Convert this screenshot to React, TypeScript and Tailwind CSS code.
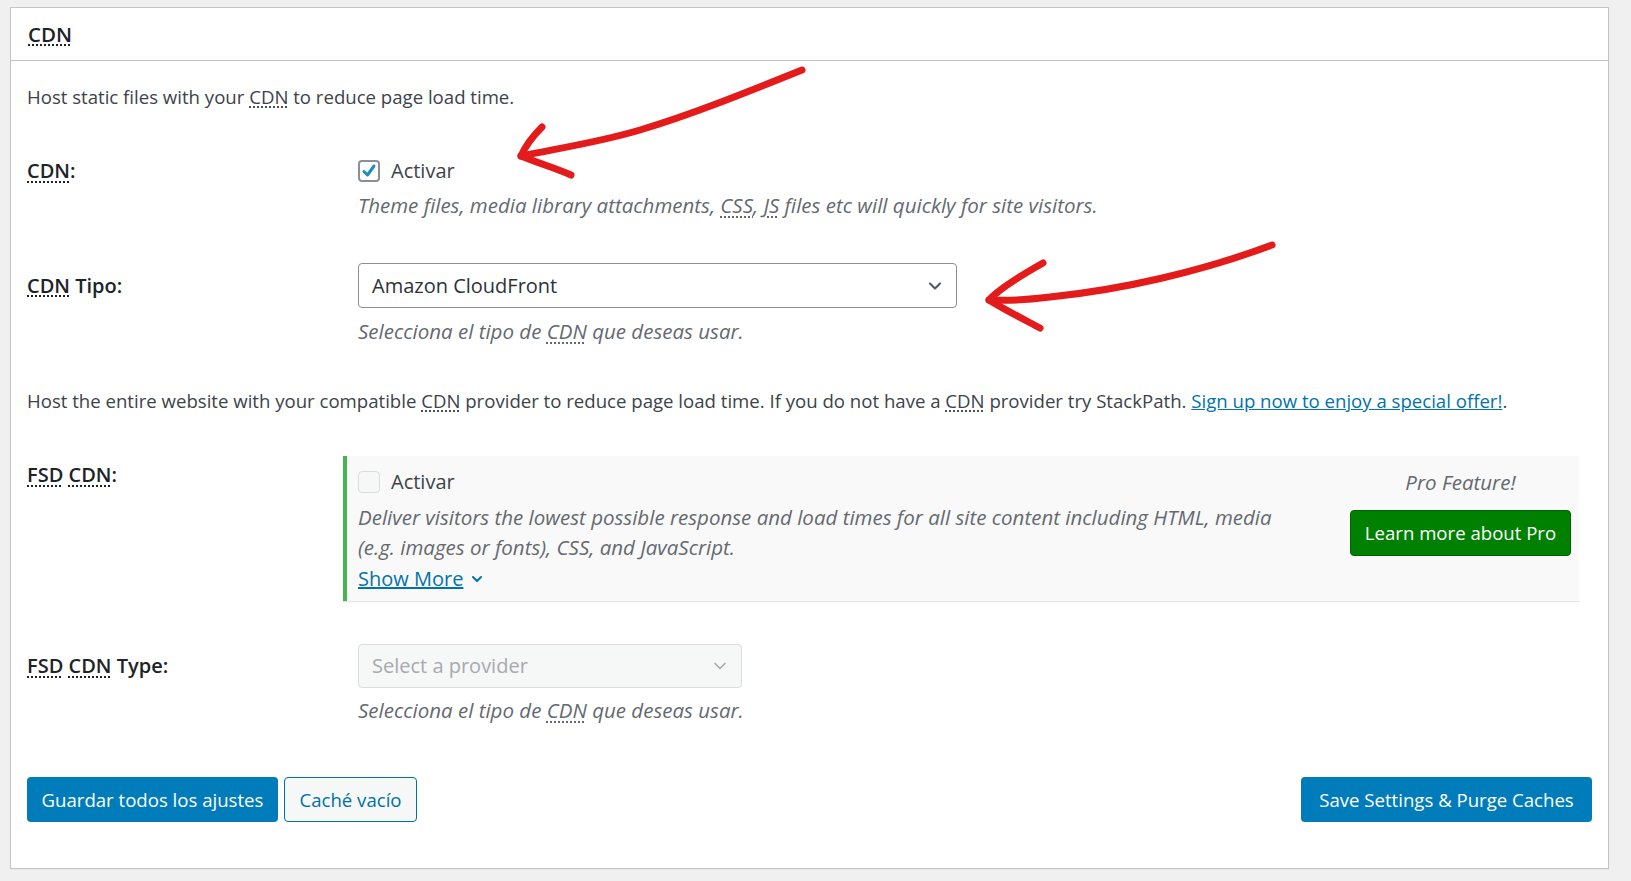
import { ChevronDown } from 'lucide-react'

const font = { fontFamily: '"Open Sans", "Noto Sans", Arial, sans-serif' }

function Abbr({ children }: { children: string }) {
  return (
    <abbr title={children} className="underline decoration-dotted underline-offset-[3px]">
      {children}
    </abbr>
  )
}

function Check({ checked, disabled }: { checked?: boolean; disabled?: boolean }) {
  return (
    <span
      className={
        disabled
          ? 'flex h-[22px] w-[22px] shrink-0 items-center justify-center rounded-[4px] border border-[#dcdcde] bg-[#f6f7f7]'
          : 'flex h-[22px] w-[22px] shrink-0 items-center justify-center rounded-[4px] border-2 border-[#8c8f94] bg-white'
      }
    >
      {checked && (
        <svg width="16" height="16" viewBox="0 0 16 16">
          <path d="M3 8.5 L6.5 12 L13 3" fill="none" stroke="#1e8cbe" strokeWidth="3" strokeLinecap="round" strokeLinejoin="round" />
        </svg>
      )}
    </span>
  )
}

function Arrows() {
  return (
    <svg className="pointer-events-none absolute left-0 top-0" width="1631" height="881">
      <g fill="none" stroke="#e31b1b" strokeWidth="7" strokeLinecap="round" strokeLinejoin="round">
        <path d="M802 70 C 740 95, 690 115, 640 130 C 600 142, 560 148, 521 156" />
        <path d="M542 127 C 532 137, 525 147, 521 156 C 535 162, 555 168, 571 175" />
        <path d="M1272 245 C 1200 272, 1120 290, 1050 297 C 1025 300, 1005 301, 989 300" />
        <path d="M1043 263 C 1020 276, 1000 288, 989 300 C 1005 310, 1025 320, 1040 328" />
      </g>
    </svg>
  )
}

export default function App() {
  return (
    <div className="relative min-h-screen bg-[#f0f0f1] pl-[10px] pr-[22px] pt-[7px] text-[18.6px] text-[#3c434a]" style={font}>
      <div className="border border-[#c3c4c7] bg-white shadow-[0_1px_1px_rgba(0,0,0,0.04)]">
        <div className="flex h-[53px] items-center border-b border-[#c3c4c7] px-[17px] text-[20.5px] font-semibold text-[#1d2327]">
          <Abbr>CDN</Abbr>
        </div>

        <div className="px-4 pb-[46px] pt-[21px] leading-[30px]">
          <p>
            Host static files with your <Abbr>CDN</Abbr> to reduce page load time.
          </p>

          <div className="mt-[44px] flex">
            <div className="w-[331px] shrink-0 text-[20px] font-semibold text-[#1d2327]">
              <Abbr>CDN</Abbr>:
            </div>
            <div>
              <label className="flex items-center gap-[11px] text-[20px]">
                <Check checked />
                <span>Activar</span>
              </label>
              <p className="mt-1 text-[20.5px] italic text-[#646970]">
                Theme files, media library attachments, <Abbr>CSS</Abbr>, <Abbr>JS</Abbr> files etc will quickly for site visitors.
              </p>
            </div>
          </div>

          <div className="mt-[43px] flex">
            <div className="flex h-[45px] w-[331px] shrink-0 items-center text-[20px] font-semibold text-[#1d2327]">
              <span>
                <Abbr>CDN</Abbr> Tipo:
              </span>
            </div>
            <div>
              <div className="flex h-[45px] w-[599px] items-center justify-between rounded-[4px] border border-[#8c8f94] bg-white pl-[13px] pr-[11px] text-[20px] text-[#2c3338]">
                <span>Amazon CloudFront</span>
                <ChevronDown size={20} strokeWidth={2.5} className="text-[#50575e]" />
              </div>
              <p className="mt-2 text-[20.5px] italic text-[#646970]">
                Selecciona el tipo de <Abbr>CDN</Abbr> que deseas usar.
              </p>
            </div>
          </div>

          <p className="mt-[40px]">
            Host the entire website with your compatible <Abbr>CDN</Abbr> provider to reduce page load time. If you do not have a <Abbr>CDN</Abbr> provider try StackPath.{' '}
            <a href="#" className="text-[#0073aa] underline">
              Sign up now to enjoy a special offer!
            </a>
            .
          </p>

          <div className="mt-[40px] flex">
            <div className="w-[316px] shrink-0 pt-[4px] text-[20px] font-semibold text-[#1d2327]">
              <Abbr>FSD</Abbr> <Abbr>CDN</Abbr>:
            </div>
            <div className="flex w-[1236px] border-l-4 border-[#46b450] bg-[#f9f9f9] pb-[7px] pl-[11px] pr-[8px] pt-[11px] shadow-[0_1px_1px_rgba(0,0,0,0.1)]">
              <div className="flex-1">
                <label className="flex items-center gap-[11px] text-[20px]">
                  <Check disabled />
                  <span>Activar</span>
                </label>
                <p className="mt-[5px] text-[20.5px] italic text-[#646970]">
                  Deliver visitors the lowest possible response and load times for all site content including HTML, media
                  <br />
                  (e.g. images or fonts), CSS, and JavaScript.
                </p>
                <a href="#" className="mt-[2px] flex w-fit items-center gap-[6px] text-[20px] text-[#0073aa] underline">
                  Show More
                  <ChevronDown size={16} strokeWidth={3} />
                </a>
              </div>
              <div className="flex w-[221px] flex-col items-center">
                <span className="text-[20.5px] italic text-[#646970]">Pro Feature!</span>
                <a href="#" className="mt-[13px] flex h-[46px] w-[221px] items-center justify-center rounded-[4px] border border-[#006200] bg-[#008000] text-white">
                  Learn more about Pro
                </a>
              </div>
            </div>
          </div>

          <div className="mt-[43px] flex">
            <div className="flex h-[44px] w-[331px] shrink-0 items-center text-[20px] font-semibold text-[#1d2327]">
              <span>
                <Abbr>FSD</Abbr> <Abbr>CDN</Abbr> Type:
              </span>
            </div>
            <div>
              <div className="flex h-[44px] w-[384px] items-center justify-between rounded-[4px] border border-[#dcdcde] bg-[#f6f7f7] pl-[13px] pr-[11px] text-[20px] text-[#a7aaad]">
                <span>Select a provider</span>
                <ChevronDown size={20} strokeWidth={2} className="text-[#a7aaad]" />
              </div>
              <p className="mt-[7px] text-[20.5px] italic text-[#646970]">
                Selecciona el tipo de <Abbr>CDN</Abbr> que deseas usar.
              </p>
            </div>
          </div>

          <div className="mt-[52px] flex items-center justify-between">
            <div className="flex gap-[6px]">
              <button className="h-[45px] w-[251px] rounded-[4px] bg-[#007cba] text-white">Guardar todos los ajustes</button>
              <button className="h-[45px] w-[133px] rounded-[4px] border-[1.5px] border-[#0071a1] bg-[#f6f7f7] text-[#0071a1]">Caché vacío</button>
            </div>
            <button className="h-[45px] w-[291px] rounded-[4px] bg-[#007cba] text-white">Save Settings &amp; Purge Caches</button>
          </div>
        </div>
      </div>
      <Arrows />
    </div>
  )
}
